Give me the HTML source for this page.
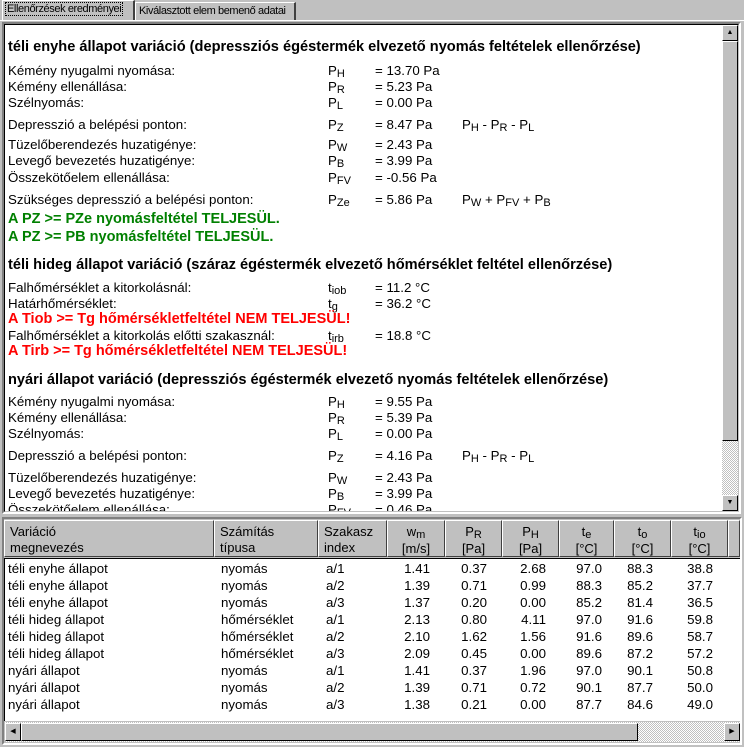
<!DOCTYPE html>
<html><head><meta charset="utf-8"><style>
*{margin:0;padding:0;box-sizing:border-box}
body{width:744px;height:747px;background:#c0c0c0;font-family:"Liberation Sans",Arial,sans-serif;font-size:13.3px;color:#000;position:relative;overflow:hidden}
.a{position:absolute;white-space:nowrap;line-height:15px}
.b{font-weight:bold;font-size:14.6px}
.g{color:#008000;font-weight:bold;font-size:14.5px}
.r{color:#f00;font-weight:bold;font-size:14.5px}
s{text-decoration:none;font-size:11px;position:relative;top:2px}
.tab{position:absolute;top:2px;height:18px;border:1px solid #fff;border-right:2px solid #404040;border-bottom:none;font-size:11px;padding:2px 3px;line-height:13px;white-space:nowrap;letter-spacing:-0.4px;overflow:hidden}
.hd{position:absolute;top:520px;height:37px;border-left:1px solid #fff;border-top:1px solid #fff;border-right:1px solid #404040;border-bottom:1px solid #404040;background:#c0c0c0;padding:3px 5px 0;line-height:16px;font-size:13px}
.c{text-align:center}
.row{position:absolute;left:8px;width:720px;height:17px;line-height:17px}
.row span{position:absolute}
.n{text-align:right;width:50px}
</style></head><body>
<div class="tab" style="left:2px;width:133px;top:0;height:21px;background:#c0c0c0"><span style="outline:1px dotted #000;padding:0 1px">Ellenőrzések eredményei</span></div>
<div class="tab" style="left:135px;width:161px">Kiválasztott elem bemenő adatai</div>
<div style="position:absolute;left:0;top:20px;width:744px;height:1px;background:#fff"></div>
<div style="position:absolute;left:2px;top:22px;width:739px;height:492px;border:2px solid;border-color:#808080 #fff #fff #808080;background:#fff;overflow:hidden">
 <div style="position:absolute;left:0;top:0;width:735px;height:488px;border:1px solid;border-color:#000 #c0c0c0 #c0c0c0 #000"></div>
 <div style="position:absolute;left:718px;top:1px;width:16px;height:486px;background:#e0e0e0;background-image:repeating-conic-gradient(#c0c0c0 0 25%,#fff 0 50%);background-size:2px 2px"></div>
 <div style="position:absolute;left:718px;top:1px;width:16px;height:16px;background:#c0c0c0;border:1px solid;border-color:#fff #000 #000 #fff;font-size:7px;text-align:center;line-height:14px">▲</div>
 <div style="position:absolute;left:718px;top:17px;width:16px;height:400px;background:#c0c0c0;border:1px solid;border-color:#fff #000 #000 #fff"></div>
 <div style="position:absolute;left:718px;top:471px;width:16px;height:16px;background:#c0c0c0;border:1px solid;border-color:#fff #000 #000 #fff;font-size:7px;text-align:center;line-height:14px">▼</div>
</div>
<div style="position:absolute;left:5px;top:25px;width:715px;height:486px;overflow:hidden">
<div class="a b" style="left:3px;top:15px">téli enyhe állapot variáció (depressziós égéstermék elvezető nyomás feltételek ellenőrzése)</div>
<div class="a" style="left:3px;top:38px">Kémény nyugalmi nyomása:</div><div class="a" style="left:323px;top:38px">P<s>H</s></div><div class="a" style="left:370px;top:38px">= 13.70 Pa</div>
<div class="a" style="left:3px;top:54px">Kémény ellenállása:</div><div class="a" style="left:323px;top:54px">P<s>R</s></div><div class="a" style="left:370px;top:54px">= 5.23 Pa</div>
<div class="a" style="left:3px;top:70px">Szélnyomás:</div><div class="a" style="left:323px;top:70px">P<s>L</s></div><div class="a" style="left:370px;top:70px">= 0.00 Pa</div>
<div class="a" style="left:3px;top:92px">Depresszió a belépési ponton:</div><div class="a" style="left:323px;top:92px">P<s>Z</s></div><div class="a" style="left:370px;top:92px">= 8.47 Pa</div><div class="a" style="left:457px;top:92px">P<s>H</s> - P<s>R</s> - P<s>L</s></div>
<div class="a" style="left:3px;top:112px">Tüzelőberendezés huzatigénye:</div><div class="a" style="left:323px;top:112px">P<s>W</s></div><div class="a" style="left:370px;top:112px">= 2.43 Pa</div>
<div class="a" style="left:3px;top:128px">Levegő bevezetés huzatigénye:</div><div class="a" style="left:323px;top:128px">P<s>B</s></div><div class="a" style="left:370px;top:128px">= 3.99 Pa</div>
<div class="a" style="left:3px;top:145px">Összekötőelem ellenállása:</div><div class="a" style="left:323px;top:145px">P<s>FV</s></div><div class="a" style="left:370px;top:145px">= -0.56 Pa</div>
<div class="a" style="left:3px;top:167px">Szükséges depresszió a belépési ponton:</div><div class="a" style="left:323px;top:167px">P<s>Ze</s></div><div class="a" style="left:370px;top:167px">= 5.86 Pa</div><div class="a" style="left:457px;top:167px">P<s>W</s> + P<s>FV</s> + P<s>B</s></div>
<div class="a g" style="left:3px;top:187px">A PZ &gt;= PZe nyomásfeltétel TELJESÜL.</div>
<div class="a g" style="left:3px;top:205px">A PZ &gt;= PB nyomásfeltétel TELJESÜL.</div>
<div class="a b" style="left:3px;top:233px">téli hideg állapot variáció (száraz égéstermék elvezető hőmérséklet feltétel ellenőrzése)</div>
<div class="a" style="left:3px;top:255px">Falhőmérséklet a kitorkolásnál:</div><div class="a" style="left:323px;top:255px">t<s>iob</s></div><div class="a" style="left:370px;top:255px">= 11.2 °C</div>
<div class="a" style="left:3px;top:271px">Határhőmérséklet:</div><div class="a" style="left:323px;top:271px">t<s>g</s></div><div class="a" style="left:370px;top:271px">= 36.2 °C</div>
<div class="a r" style="left:3px;top:287px">A Tiob &gt;= Tg hőmérsékletfeltétel NEM TELJESÜL!</div>
<div class="a" style="left:3px;top:303px">Falhőmérséklet a kitorkolás előtti szakasznál:</div><div class="a" style="left:323px;top:303px">t<s>irb</s></div><div class="a" style="left:370px;top:303px">= 18.8 °C</div>
<div class="a r" style="left:3px;top:319px">A Tirb &gt;= Tg hőmérsékletfeltétel NEM TELJESÜL!</div>
<div class="a b" style="left:3px;top:348px">nyári állapot variáció (depressziós égéstermék elvezető nyomás feltételek ellenőrzése)</div>
<div class="a" style="left:3px;top:369px">Kémény nyugalmi nyomása:</div><div class="a" style="left:323px;top:369px">P<s>H</s></div><div class="a" style="left:370px;top:369px">= 9.55 Pa</div>
<div class="a" style="left:3px;top:385px">Kémény ellenállása:</div><div class="a" style="left:323px;top:385px">P<s>R</s></div><div class="a" style="left:370px;top:385px">= 5.39 Pa</div>
<div class="a" style="left:3px;top:401px">Szélnyomás:</div><div class="a" style="left:323px;top:401px">P<s>L</s></div><div class="a" style="left:370px;top:401px">= 0.00 Pa</div>
<div class="a" style="left:3px;top:423px">Depresszió a belépési ponton:</div><div class="a" style="left:323px;top:423px">P<s>Z</s></div><div class="a" style="left:370px;top:423px">= 4.16 Pa</div><div class="a" style="left:457px;top:423px">P<s>H</s> - P<s>R</s> - P<s>L</s></div>
<div class="a" style="left:3px;top:445px">Tüzelőberendezés huzatigénye:</div><div class="a" style="left:323px;top:445px">P<s>W</s></div><div class="a" style="left:370px;top:445px">= 2.43 Pa</div>
<div class="a" style="left:3px;top:461px">Levegő bevezetés huzatigénye:</div><div class="a" style="left:323px;top:461px">P<s>B</s></div><div class="a" style="left:370px;top:461px">= 3.99 Pa</div>
<div class="a" style="left:3px;top:477px">Összekötőelem ellenállása:</div><div class="a" style="left:323px;top:477px">P<s>FV</s></div><div class="a" style="left:370px;top:477px">= 0.46 Pa</div>
</div>
<div style="position:absolute;left:2px;top:517px;width:740px;height:228px;border:2px solid;border-color:#808080 #fff #fff #808080"></div>
<div style="position:absolute;left:4px;top:558px;width:736px;height:163px;background:#fff;border-top:1px solid #000;border-left:1px solid #000"></div>
<div class="hd" style="left:4px;width:210px">Variáció<br>megnevezés</div>
<div class="hd" style="left:214px;width:104px">Számítás<br>típusa</div>
<div class="hd" style="left:318px;width:69px">Szakasz<br>index</div>
<div class="hd c" style="left:387px;width:58px">w<s>m</s><br>[m/s]</div>
<div class="hd c" style="left:445px;width:57px">P<s>R</s><br>[Pa]</div>
<div class="hd c" style="left:502px;width:57px">P<s>H</s><br>[Pa]</div>
<div class="hd c" style="left:559px;width:55px">t<s>e</s><br>[°C]</div>
<div class="hd c" style="left:614px;width:57px">t<s>o</s><br>[°C]</div>
<div class="hd c" style="left:671px;width:57px">t<s>io</s><br>[°C]</div>
<div class="hd" style="left:728px;width:12px"></div>
<div class="row" style="top:560px"><span style="left:0">téli enyhe állapot</span><span style="left:213px">nyomás</span><span style="left:318px">a/1</span><span class="n" style="left:372px">1.41</span><span class="n" style="left:429px">0.37</span><span class="n" style="left:488px">2.68</span><span class="n" style="left:544px">97.0</span><span class="n" style="left:595px">88.3</span><span class="n" style="left:655px">38.8</span></div>
<div class="row" style="top:577px"><span style="left:0">téli enyhe állapot</span><span style="left:213px">nyomás</span><span style="left:318px">a/2</span><span class="n" style="left:372px">1.39</span><span class="n" style="left:429px">0.71</span><span class="n" style="left:488px">0.99</span><span class="n" style="left:544px">88.3</span><span class="n" style="left:595px">85.2</span><span class="n" style="left:655px">37.7</span></div>
<div class="row" style="top:594px"><span style="left:0">téli enyhe állapot</span><span style="left:213px">nyomás</span><span style="left:318px">a/3</span><span class="n" style="left:372px">1.37</span><span class="n" style="left:429px">0.20</span><span class="n" style="left:488px">0.00</span><span class="n" style="left:544px">85.2</span><span class="n" style="left:595px">81.4</span><span class="n" style="left:655px">36.5</span></div>
<div class="row" style="top:611px"><span style="left:0">téli hideg állapot</span><span style="left:213px">hőmérséklet</span><span style="left:318px">a/1</span><span class="n" style="left:372px">2.13</span><span class="n" style="left:429px">0.80</span><span class="n" style="left:488px">4.11</span><span class="n" style="left:544px">97.0</span><span class="n" style="left:595px">91.6</span><span class="n" style="left:655px">59.8</span></div>
<div class="row" style="top:628px"><span style="left:0">téli hideg állapot</span><span style="left:213px">hőmérséklet</span><span style="left:318px">a/2</span><span class="n" style="left:372px">2.10</span><span class="n" style="left:429px">1.62</span><span class="n" style="left:488px">1.56</span><span class="n" style="left:544px">91.6</span><span class="n" style="left:595px">89.6</span><span class="n" style="left:655px">58.7</span></div>
<div class="row" style="top:645px"><span style="left:0">téli hideg állapot</span><span style="left:213px">hőmérséklet</span><span style="left:318px">a/3</span><span class="n" style="left:372px">2.09</span><span class="n" style="left:429px">0.45</span><span class="n" style="left:488px">0.00</span><span class="n" style="left:544px">89.6</span><span class="n" style="left:595px">87.2</span><span class="n" style="left:655px">57.2</span></div>
<div class="row" style="top:662px"><span style="left:0">nyári állapot</span><span style="left:213px">nyomás</span><span style="left:318px">a/1</span><span class="n" style="left:372px">1.41</span><span class="n" style="left:429px">0.37</span><span class="n" style="left:488px">1.96</span><span class="n" style="left:544px">97.0</span><span class="n" style="left:595px">90.1</span><span class="n" style="left:655px">50.8</span></div>
<div class="row" style="top:679px"><span style="left:0">nyári állapot</span><span style="left:213px">nyomás</span><span style="left:318px">a/2</span><span class="n" style="left:372px">1.39</span><span class="n" style="left:429px">0.71</span><span class="n" style="left:488px">0.72</span><span class="n" style="left:544px">90.1</span><span class="n" style="left:595px">87.7</span><span class="n" style="left:655px">50.0</span></div>
<div class="row" style="top:696px"><span style="left:0">nyári állapot</span><span style="left:213px">nyomás</span><span style="left:318px">a/3</span><span class="n" style="left:372px">1.38</span><span class="n" style="left:429px">0.21</span><span class="n" style="left:488px">0.00</span><span class="n" style="left:544px">87.7</span><span class="n" style="left:595px">84.6</span><span class="n" style="left:655px">49.0</span></div>
<div style="position:absolute;left:5px;top:722px;width:735px;height:20px;background-image:repeating-conic-gradient(#c0c0c0 0 25%,#fff 0 50%);background-size:2px 2px"></div>
<div style="position:absolute;left:5px;top:723px;width:16px;height:18px;background:#c0c0c0;border:1px solid;border-color:#fff #000 #000 #fff;font-size:7px;text-align:center;line-height:16px">◀</div>
<div style="position:absolute;left:21px;top:723px;width:617px;height:18px;background:#c0c0c0;border:1px solid;border-color:#fff #000 #000 #fff"></div>
<div style="position:absolute;left:724px;top:723px;width:16px;height:18px;background:#c0c0c0;border:1px solid;border-color:#fff #000 #000 #fff;font-size:7px;text-align:center;line-height:16px">▶</div>
</body></html>
